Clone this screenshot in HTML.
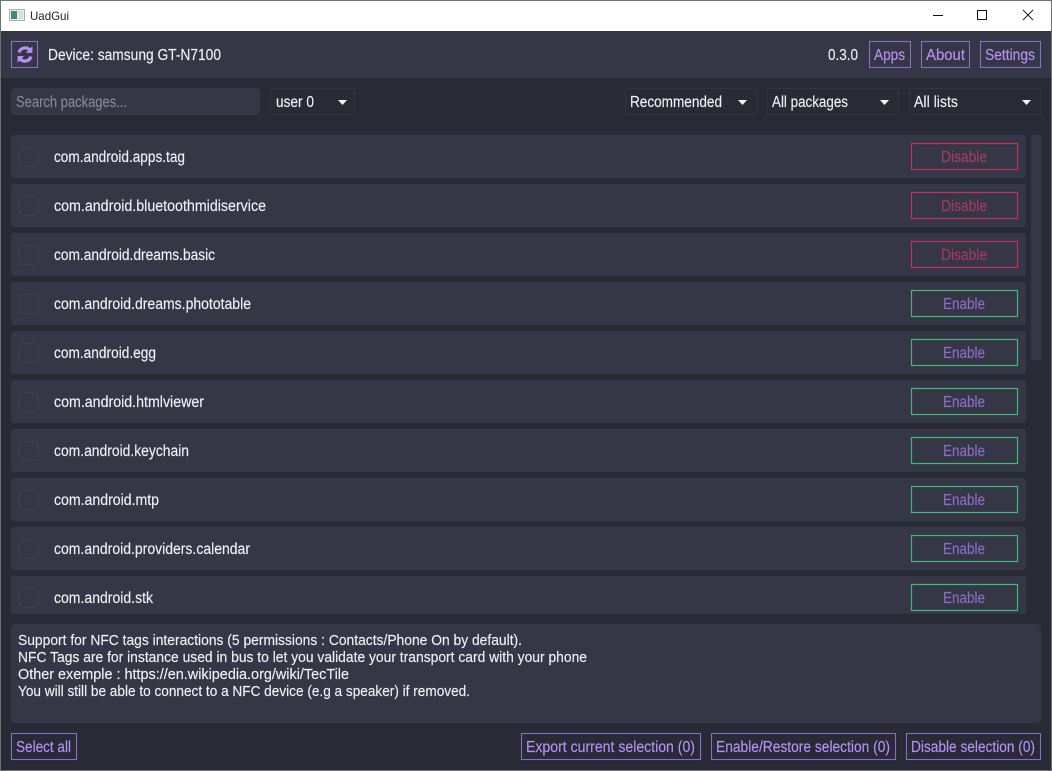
<!DOCTYPE html>
<html><head><meta charset="utf-8"><title>UadGui</title>
<style>
html,body{margin:0;padding:0;background:#282a36;width:1052px;height:771px;overflow:hidden}
svg{display:block}
text{font-family:"Liberation Sans",sans-serif;font-size:15.5px;fill:#f0f0f2;stroke:#f0f0f2;stroke-width:.15}
.p{fill:#b78ff5;stroke:#b78ff5}
.d{fill:#a63a62;stroke:#a63a62}
.e{fill:#8a6cc4;stroke:#8a6cc4}
.b{fill:none;stroke:#8a6cc8;stroke-width:1.1}
.r{fill:#353746}
.c{fill:none;stroke:#3f4152;stroke-width:1}
.ps{fill:#282a36;stroke:#32343f;stroke-width:1}
.gb{fill:none;stroke:#46b578;stroke-width:1.2}
.rb{fill:none;stroke:#c2305f;stroke-width:1.2}
</style></head>
<body>
<svg width="1052" height="771" viewBox="0 0 1052 771" xmlns="http://www.w3.org/2000/svg">
<rect width="1052" height="771" fill="#282a36"/>
<!-- title bar -->
<rect x="0" y="0" width="1052" height="31" fill="#ffffff"/>
<g>
<rect x="9.5" y="9.5" width="15" height="11" fill="#e8eeee" stroke="#a8b0b0"/>
<rect x="11" y="11" width="6" height="8" fill="#3f8a80"/>
<rect x="18" y="11" width="5" height="8" fill="#d6dee0"/>
</g>
<text x="30" y="20" style="font-size:12px;fill:#222;stroke:none" textLength="39" lengthAdjust="spacingAndGlyphs">UadGui</text>
<path d="M933 15.5h10" stroke="#111" stroke-width="1" fill="none"/>
<rect x="977.5" y="10.5" width="9" height="9" fill="none" stroke="#111" stroke-width="1"/>
<path d="M1023 10l10 10M1033 10l-10 10" stroke="#222" stroke-width="1" fill="none"/>
<!-- top nav -->
<rect x="0" y="31" width="1052" height="47" fill="#353746"/>
<rect x="11.5" y="41.5" width="26" height="26" class="b"/>
<g fill="none" stroke="#b78ff5" stroke-width="3.2">
<path d="M19 52.5a6.3 6.3 0 0 1 10.8-2.4"/>
<path d="M31 56.5a6.3 6.3 0 0 1-10.8 2.4"/>
</g>
<path d="M32.4 46.3v6.6h-6.6zM17.6 62.7v-6.6h6.6z" fill="#b78ff5"/>
<text x="48" y="60" textLength="173" lengthAdjust="spacingAndGlyphs">Device: samsung GT-N7100</text>
<text x="828" y="60" textLength="30" lengthAdjust="spacingAndGlyphs">0.3.0</text>
<rect x="869.5" y="41.5" width="41" height="26" class="b"/>
<text class="p" x="874" y="60" textLength="31" lengthAdjust="spacingAndGlyphs">Apps</text>
<rect x="921.5" y="41.5" width="48" height="26" class="b"/>
<text class="p" x="926" y="60" textLength="39" lengthAdjust="spacingAndGlyphs">About</text>
<rect x="980.5" y="41.5" width="60" height="26" class="b"/>
<text class="p" x="985" y="60" textLength="50" lengthAdjust="spacingAndGlyphs">Settings</text>
<!-- filters -->
<rect x="11" y="88" width="249" height="27" rx="4" fill="#353746"/>
<text x="16" y="107" style="fill:#85878f;stroke:#85878f" textLength="111" lengthAdjust="spacingAndGlyphs">Search packages...</text>
<rect x="270.5" y="88.5" width="84" height="26" class="ps"/>
<text x="276" y="107" textLength="38" lengthAdjust="spacingAndGlyphs">user 0</text>
<path d="M338 100h9l-4.5 5z" fill="#f2f2f2"/>
<rect x="625.5" y="88.5" width="131" height="26" class="ps"/>
<text x="630" y="107" textLength="92" lengthAdjust="spacingAndGlyphs">Recommended</text>
<path d="M738 100h9l-4.5 5z" fill="#f2f2f2"/>
<rect x="767.5" y="88.5" width="131" height="26" class="ps"/>
<text x="772" y="107" textLength="76" lengthAdjust="spacingAndGlyphs">All packages</text>
<path d="M880 100h9l-4.5 5z" fill="#f2f2f2"/>
<rect x="909.5" y="88.5" width="131" height="26" class="ps"/>
<text x="914" y="107" textLength="44" lengthAdjust="spacingAndGlyphs">All lists</text>
<path d="M1022 100h9l-4.5 5z" fill="#f2f2f2"/>
<!-- scrollbar -->
<rect x="1031" y="135" width="10" height="225" fill="#353746"/>
<!-- rows -->
<g>
<rect class="r" x="11" y="135" width="1015" height="43" rx="3"/>
<rect class="c" x="19.5" y="147.5" width="19" height="19" rx="4"/>
<text x="54" y="162" textLength="131" lengthAdjust="spacingAndGlyphs">com.android.apps.tag</text>
<rect class="rb" x="911.5" y="143.5" width="106" height="26"/>
<text class="d" x="941" y="162" textLength="46" lengthAdjust="spacingAndGlyphs">Disable</text>

<rect class="r" x="11" y="184" width="1015" height="43" rx="3"/>
<rect class="c" x="19.5" y="196.5" width="19" height="19" rx="4"/>
<text x="54" y="211" textLength="212" lengthAdjust="spacingAndGlyphs">com.android.bluetoothmidiservice</text>
<rect class="rb" x="911.5" y="192.5" width="106" height="26"/>
<text class="d" x="941" y="211" textLength="46" lengthAdjust="spacingAndGlyphs">Disable</text>

<rect class="r" x="11" y="233" width="1015" height="43" rx="3"/>
<rect class="c" x="19.5" y="245.5" width="19" height="19" rx="4"/>
<text x="54" y="260" textLength="161" lengthAdjust="spacingAndGlyphs">com.android.dreams.basic</text>
<rect class="rb" x="911.5" y="241.5" width="106" height="26"/>
<text class="d" x="941" y="260" textLength="46" lengthAdjust="spacingAndGlyphs">Disable</text>

<rect class="r" x="11" y="282" width="1015" height="43" rx="3"/>
<rect class="c" x="19.5" y="294.5" width="19" height="19" rx="4"/>
<text x="54" y="309" textLength="197" lengthAdjust="spacingAndGlyphs">com.android.dreams.phototable</text>
<rect class="gb" x="911.5" y="290.5" width="106" height="26"/>
<text class="e" x="943" y="309" textLength="42" lengthAdjust="spacingAndGlyphs">Enable</text>

<rect class="r" x="11" y="331" width="1015" height="43" rx="3"/>
<rect class="c" x="19.5" y="343.5" width="19" height="19" rx="4"/>
<text x="54" y="358" textLength="102" lengthAdjust="spacingAndGlyphs">com.android.egg</text>
<rect class="gb" x="911.5" y="339.5" width="106" height="26"/>
<text class="e" x="943" y="358" textLength="42" lengthAdjust="spacingAndGlyphs">Enable</text>

<rect class="r" x="11" y="380" width="1015" height="43" rx="3"/>
<rect class="c" x="19.5" y="392.5" width="19" height="19" rx="4"/>
<text x="54" y="407" textLength="150" lengthAdjust="spacingAndGlyphs">com.android.htmlviewer</text>
<rect class="gb" x="911.5" y="388.5" width="106" height="26"/>
<text class="e" x="943" y="407" textLength="42" lengthAdjust="spacingAndGlyphs">Enable</text>

<rect class="r" x="11" y="429" width="1015" height="43" rx="3"/>
<rect class="c" x="19.5" y="441.5" width="19" height="19" rx="4"/>
<text x="54" y="456" textLength="135" lengthAdjust="spacingAndGlyphs">com.android.keychain</text>
<rect class="gb" x="911.5" y="437.5" width="106" height="26"/>
<text class="e" x="943" y="456" textLength="42" lengthAdjust="spacingAndGlyphs">Enable</text>

<rect class="r" x="11" y="478" width="1015" height="43" rx="3"/>
<rect class="c" x="19.5" y="490.5" width="19" height="19" rx="4"/>
<text x="54" y="505" textLength="105" lengthAdjust="spacingAndGlyphs">com.android.mtp</text>
<rect class="gb" x="911.5" y="486.5" width="106" height="26"/>
<text class="e" x="943" y="505" textLength="42" lengthAdjust="spacingAndGlyphs">Enable</text>

<rect class="r" x="11" y="527" width="1015" height="43" rx="3"/>
<rect class="c" x="19.5" y="539.5" width="19" height="19" rx="4"/>
<text x="54" y="554" textLength="196" lengthAdjust="spacingAndGlyphs">com.android.providers.calendar</text>
<rect class="gb" x="911.5" y="535.5" width="106" height="26"/>
<text class="e" x="943" y="554" textLength="42" lengthAdjust="spacingAndGlyphs">Enable</text>

<rect class="r" x="11" y="576" width="1015" height="38"/>
<rect class="c" x="19.5" y="588.5" width="19" height="19" rx="4"/>
<text x="54" y="603" textLength="99" lengthAdjust="spacingAndGlyphs">com.android.stk</text>
<rect class="gb" x="911.5" y="584.5" width="106" height="26"/>
<text class="e" x="943" y="603" textLength="42" lengthAdjust="spacingAndGlyphs">Enable</text>
</g>
<!-- description -->
<rect x="11" y="624" width="1030" height="99" rx="4" fill="#353746"/>
<text x="18" y="645" style="font-size:15px" textLength="504" lengthAdjust="spacingAndGlyphs">Support for NFC tags interactions (5 permissions : Contacts/Phone On by default).</text>
<text x="18" y="662" style="font-size:15px" textLength="569" lengthAdjust="spacingAndGlyphs">NFC Tags are for instance used in bus to let you validate your transport card with your phone</text>
<text x="18" y="679" style="font-size:15px" textLength="331" lengthAdjust="spacingAndGlyphs">Other exemple : https://en.wikipedia.org/wiki/TecTile</text>
<text x="18" y="696" style="font-size:15px" textLength="452" lengthAdjust="spacingAndGlyphs">You will still be able to connect to a NFC device (e.g a speaker) if removed.</text>
<!-- bottom buttons -->
<rect x="11.5" y="733.5" width="65" height="26" class="b"/>
<text class="p" x="16" y="752" textLength="55" lengthAdjust="spacingAndGlyphs">Select all</text>
<rect x="521.5" y="733.5" width="179" height="26" class="b"/>
<text class="p" x="526" y="752" textLength="169" lengthAdjust="spacingAndGlyphs">Export current selection (0)</text>
<rect x="711.5" y="733.5" width="184" height="26" class="b"/>
<text class="p" x="716" y="752" textLength="174" lengthAdjust="spacingAndGlyphs">Enable/Restore selection (0)</text>
<rect x="906.5" y="733.5" width="134" height="26" class="b"/>
<text class="p" x="911" y="752" textLength="124" lengthAdjust="spacingAndGlyphs">Disable selection (0)</text>
<!-- window frame -->
<rect x="0.5" y="0.5" width="1051" height="770" fill="none" stroke="#6f7075" stroke-width="1"/>
</svg>
</body></html>
